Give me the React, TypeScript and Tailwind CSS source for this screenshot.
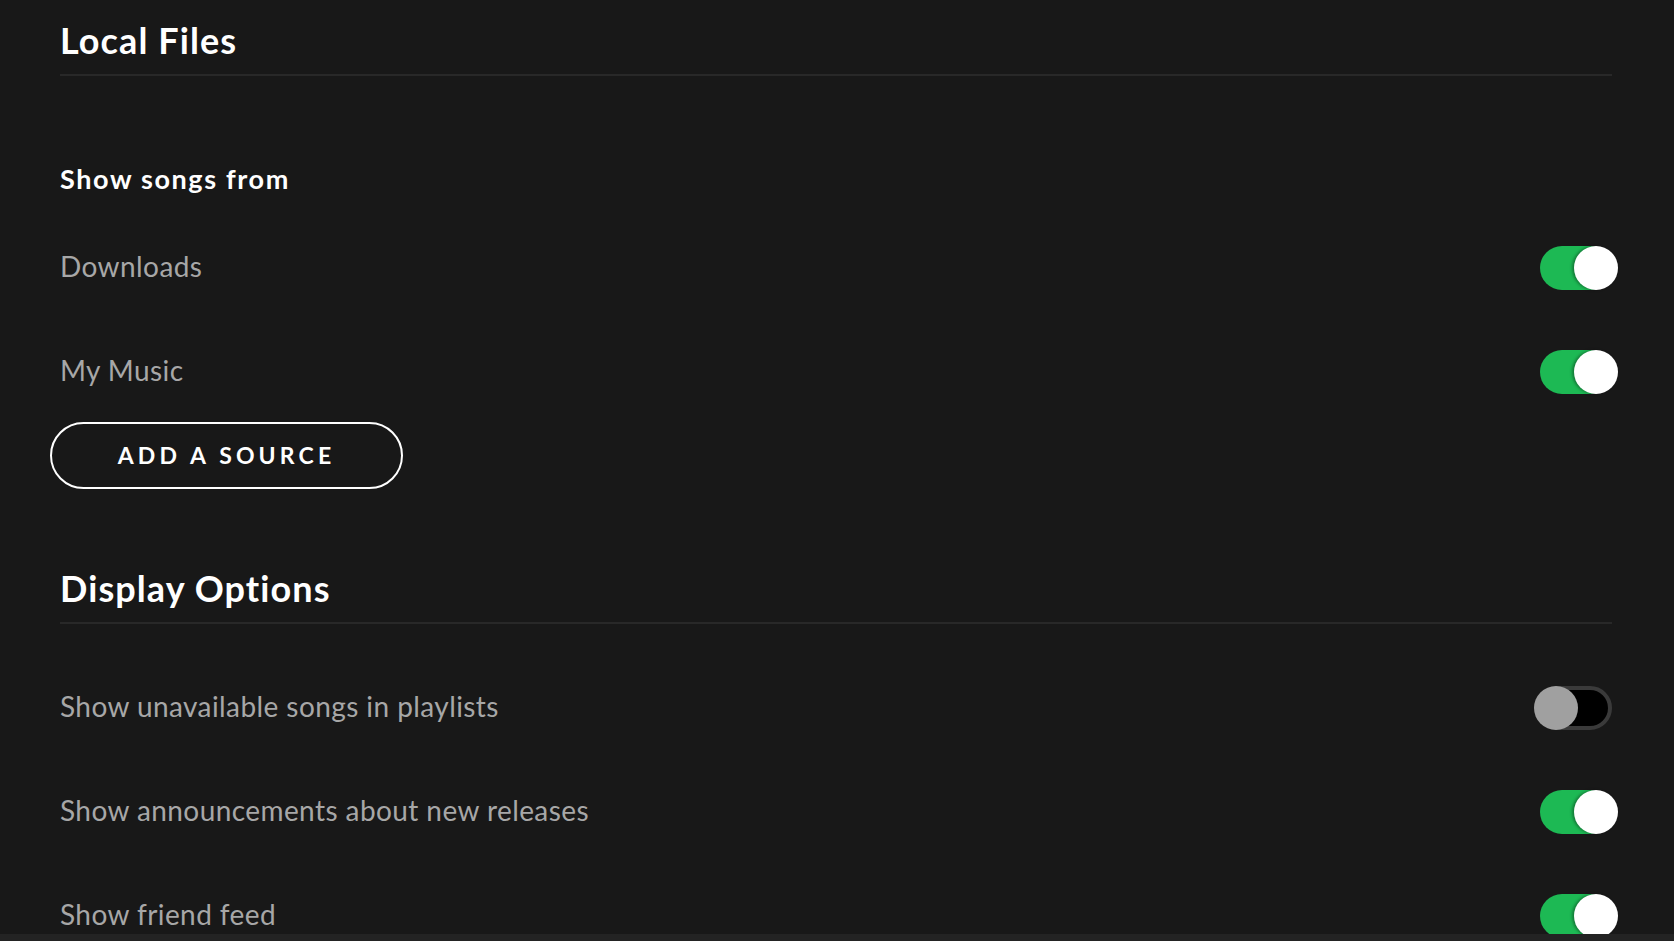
import React from "react";

function Toggle({ on }: { on: boolean }) {
  return (
    <div className="relative w-[72px] h-[44px] shrink-0">
      {on ? (
        <>
          <div className="absolute inset-0 rounded-full bg-[#1db954]" />
          <div className="absolute top-0 left-[34px] w-[44px] h-[44px] rounded-full bg-white shadow-[-2px_0_3px_rgba(0,0,0,0.35)]" />
        </>
      ) : (
        <>
          <div className="absolute inset-0 rounded-full bg-black border-[4px] border-[#3a3a3a]" />
          <div className="absolute top-0 left-[-6px] w-[44px] h-[44px] rounded-full bg-[#a0a0a0]" />
        </>
      )}
    </div>
  );
}

function Row({ label, on }: { label: string; on: boolean }) {
  return (
    <div className="flex items-center justify-between h-[104px]">
      <span className="text-[28px] leading-[34px] text-[#a7a7a7] tracking-[0.015em] -mt-[4px]">{label}</span>
      <Toggle on={on} />
    </div>
  );
}

function Heading({ children }: { children: React.ReactNode }) {
  return (
    <div>
      <h1 className="text-[36px] leading-[44px] font-bold text-white tracking-[0.03em]">{children}</h1>
      <div className="mt-[12px] h-[2px] bg-[#282828]" />
    </div>
  );
}

export default function App() {
  return (
    <div
      className="w-[1674px] h-[941px] bg-[#181818] flex flex-col overflow-hidden"
      style={{ fontFamily: "Lato, 'Noto Sans', sans-serif" }}
    >
      <div className="flex-1 overflow-hidden pl-[60px] pr-[62px] pt-[18px]">
        <Heading>Local Files</Heading>
        <h2 className="mt-[87px] text-[27px] leading-[32px] font-bold text-white tracking-[0.06em]">Show songs from</h2>
        <div className="mt-[21px]">
          <Row label="Downloads" on={true} />
          <Row label="My Music" on={true} />
        </div>
        <button className="-ml-[10px] -mt-[2px] w-[353px] h-[67px] rounded-full border-2 border-white flex items-center justify-center text-white text-[23px] font-bold tracking-[0.18em]">
          ADD A SOURCE
        </button>
        <div className="mt-[77px]">
          <Heading>Display Options</Heading>
        </div>
        <div className="mt-[32px]">
          <Row label="Show unavailable songs in playlists" on={false} />
          <Row label="Show announcements about new releases" on={true} />
          <Row label="Show friend feed" on={true} />
        </div>
      </div>
      <div className="h-[7px] bg-[#232323] shrink-0" />
    </div>
  );
}
